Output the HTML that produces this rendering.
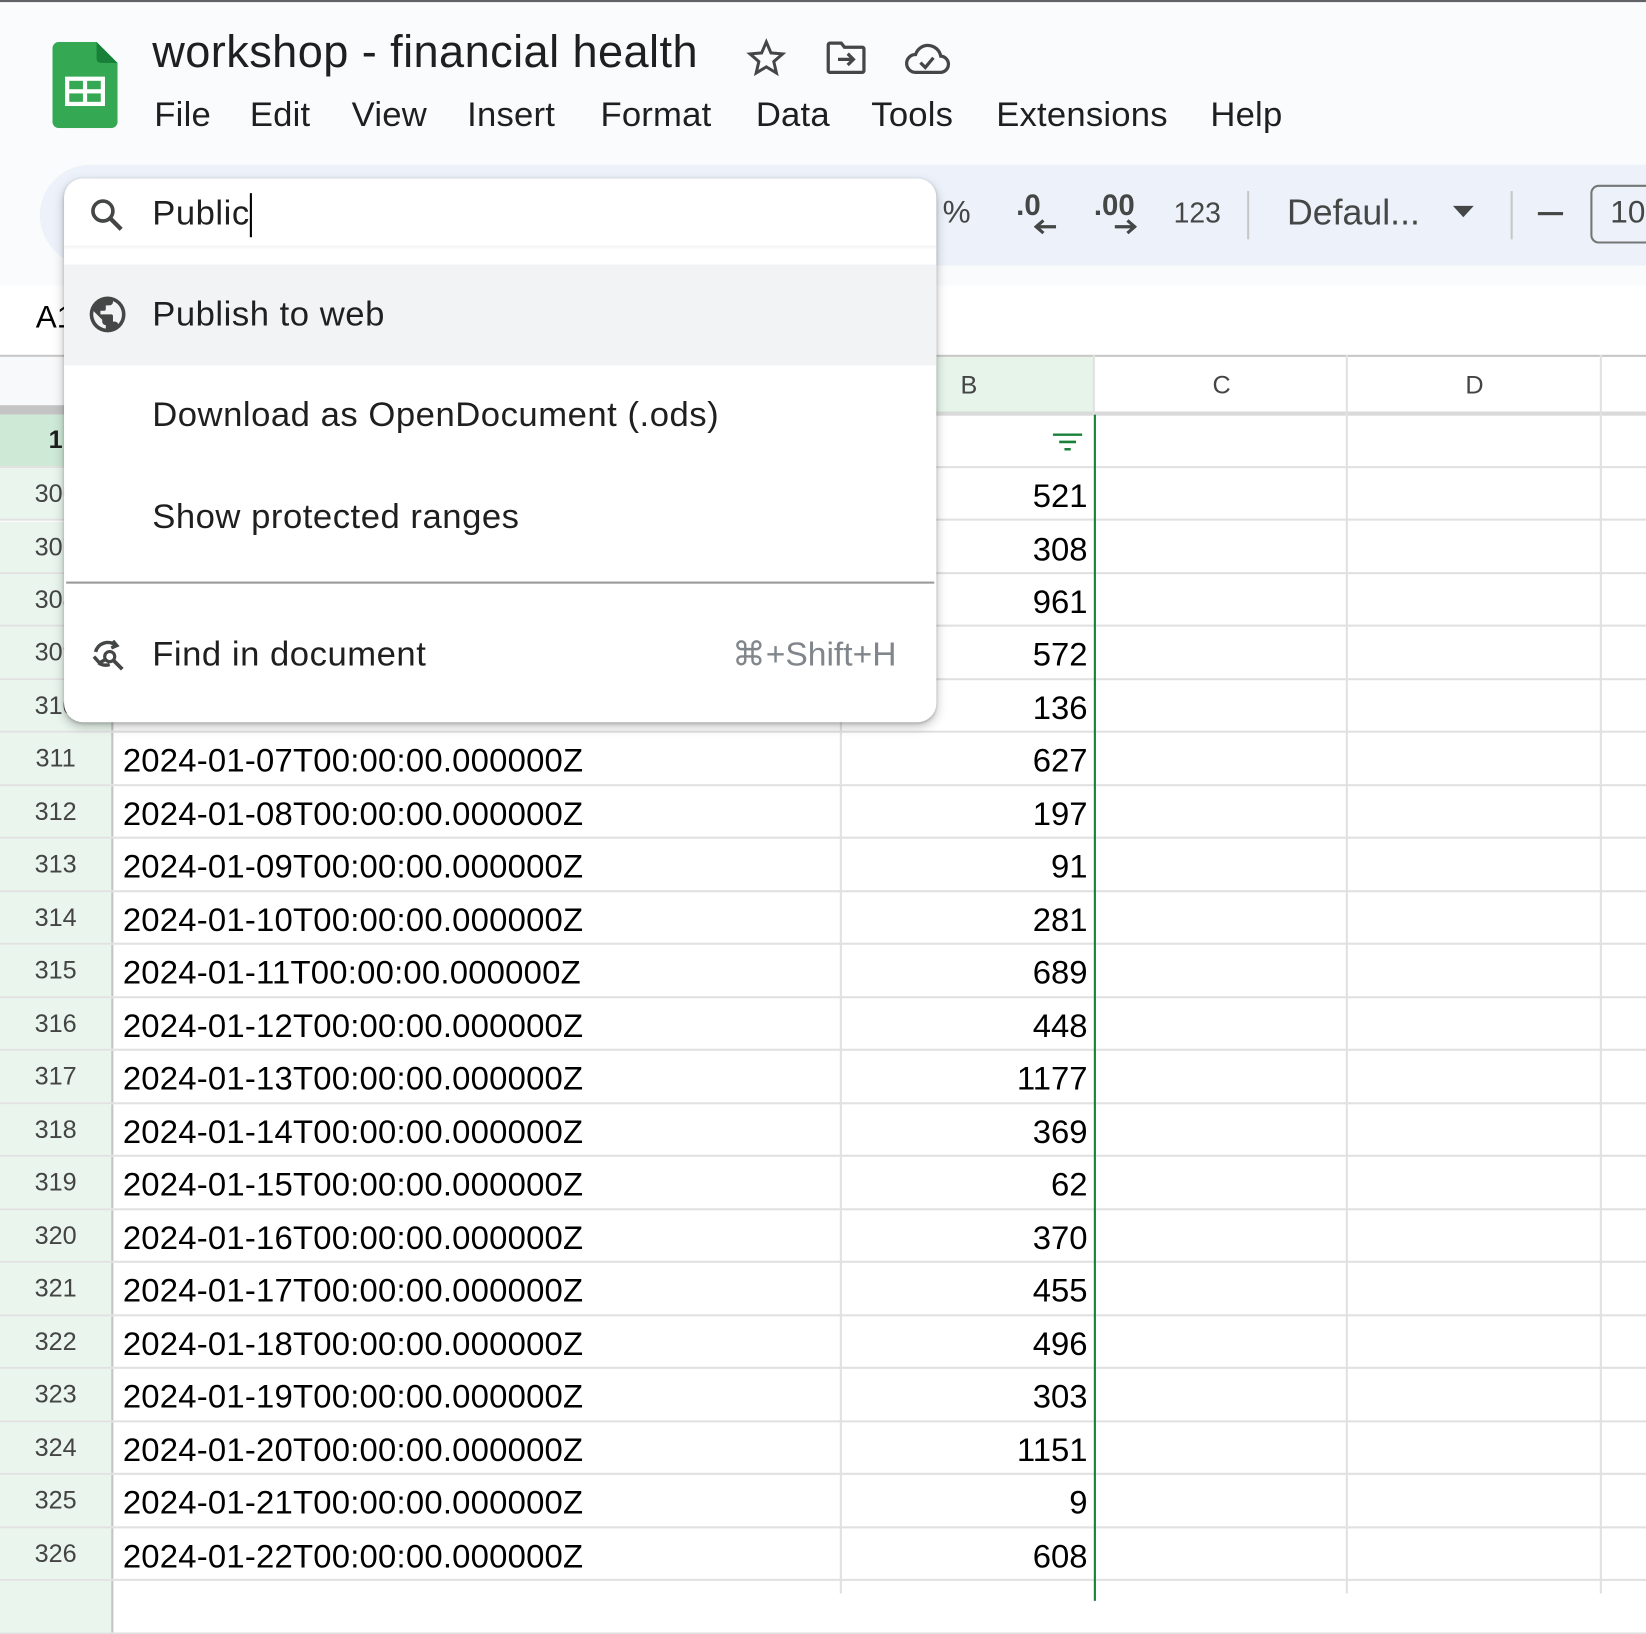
<!DOCTYPE html>
<html><head><meta charset="utf-8"><style>
*{box-sizing:border-box;margin:0;padding:0}
html,body{width:1646px;height:1592px;overflow:hidden;background:#fff}
#w{position:absolute;left:0;top:0;width:1568px;height:1517px;transform:scale(1.04974);transform-origin:0 0;font-family:"Liberation Sans",Arial,sans-serif;color:#1f1f1f}
.a{position:absolute}
.hdr{left:0;top:0;width:1568px;height:272px;background:#f9fbfd;border-top:2px solid #5f6368}
.menu span{position:absolute;top:90px;font-size:33px;color:#1f1f1f;letter-spacing:.2px}
.tb{left:38px;top:157px;width:1560px;height:96px;background:#edf2fa;border-radius:48px 0 0 48px}
.tbt{font-size:30px;color:#444746}
.grid{left:0;top:395px;width:1568px}
.row{position:absolute;left:0;width:1568px;height:50.48px;border-bottom:2px solid #e1e1e1}
.rh{position:absolute;left:0;top:0;width:108px;height:100%;background:#e9f5ed;border-right:2px solid #c4c4c4;text-align:center;font-size:24px;color:#444;line-height:50px}
.ca{position:absolute;left:117px;top:0;font-size:31.3px;line-height:54px;color:#000;letter-spacing:.2px}
.cb{position:absolute;left:801px;width:235px;top:0;text-align:right;font-size:31.3px;line-height:54px;color:#000}
.v{position:absolute;top:338px;width:2px;height:1180px;background:#e1e1e1}
.dd{left:61px;top:170px;width:831px;height:518px;background:#fff;border-radius:18px;box-shadow:0 4px 10px rgba(0,0,0,.25),0 1px 3px rgba(0,0,0,.2)}
.it{position:absolute;left:84px;font-size:33px;color:#1f1f1f;letter-spacing:.5px}
</style></head><body><div id="w">
<div class="a hdr"></div>
<svg class="a" style="left:50px;top:40px" width="62" height="82" viewBox="0 0 62 82"><path d="M6 0h36l20 20v56a6 6 0 0 1-6 6H6a6 6 0 0 1-6-6V6a6 6 0 0 1 6-6z" fill="#34a853"/><path d="M42 0l20 20H46a4 4 0 0 1-4-4z" fill="#188038"/><rect x="12" y="33" width="38" height="28" fill="#fff"/><rect x="16" y="37" width="13" height="8" fill="#34a853"/><rect x="33" y="37" width="13" height="8" fill="#34a853"/><rect x="16" y="49" width="13" height="8" fill="#34a853"/><rect x="33" y="49" width="13" height="8" fill="#34a853"/></svg>
<div class="a" style="left:145px;top:26px;font-size:43px;color:#1f1f1f;letter-spacing:.4px">workshop - financial health</div>
<svg class="a" style="left:710px;top:36px" width="40" height="38" viewBox="0 0 24 24"><path d="M12 2.5l2.8 6.6 7 .6-5.3 4.6 1.6 6.9L12 17.5l-6.1 3.7 1.6-6.9-5.3-4.6 7-.6z" fill="none" stroke="#444746" stroke-width="1.8"/></svg>
<svg class="a" style="left:785px;top:38px" width="42" height="34" viewBox="0 0 26 22"><path d="M2 3a1 1 0 0 1 1-1h7l2 2.5h11a1 1 0 0 1 1 1V19a1 1 0 0 1-1 1H3a1 1 0 0 1-1-1z" fill="none" stroke="#444746" stroke-width="2"/><path d="M8 12h9M14 8.5l3.5 3.5-3.5 3.5" fill="none" stroke="#444746" stroke-width="2"/></svg>
<svg class="a" style="left:860px;top:38px" width="46" height="34" viewBox="0 0 28 22"><path d="M7 20h15a5 5 0 0 0 .5-10A8 8 0 0 0 7 9a5.5 5.5 0 0 0 0 11z" fill="none" stroke="#444746" stroke-width="2"/><path d="M10 14l3 3 5-6" fill="none" stroke="#444746" stroke-width="2"/></svg>
<div class="menu"><span style="left:147px">File</span><span style="left:238px">Edit</span><span style="left:335px">View</span><span style="left:445px">Insert</span><span style="left:572px">Format</span><span style="left:720px">Data</span><span style="left:830px">Tools</span><span style="left:949px">Extensions</span><span style="left:1153px">Help</span></div>
<div class="a tb"></div>
<div class="a tbt" style="left:898px;top:186px">%</div>
<div class="a tbt" style="left:968px;top:180px;font-weight:bold;font-size:28px">.0</div>
<svg class="a" style="left:985px;top:208px" width="22" height="16"><path d="M21 8H3M9 2L2 8l7 6" fill="none" stroke="#444746" stroke-width="3"/></svg>
<div class="a tbt" style="left:1042px;top:180px;font-weight:bold;font-size:28px">.00</div>
<svg class="a" style="left:1061px;top:208px" width="22" height="16"><path d="M1 8h18M13 2l7 6-7 6" fill="none" stroke="#444746" stroke-width="3"/></svg>
<div class="a tbt" style="left:1118px;top:188px;font-size:27px">123</div>
<div class="a" style="left:1188px;top:182px;width:2px;height:46px;background:#c7c7c7"></div>
<div class="a tbt" style="left:1226px;top:184px;font-size:34px">Defaul...</div>
<svg class="a" style="left:1384px;top:196px" width="20" height="12"><path d="M0 0h20L10 11z" fill="#444746"/></svg>
<div class="a" style="left:1439px;top:182px;width:2px;height:46px;background:#c7c7c7"></div>
<div class="a" style="left:1465px;top:202px;width:24px;height:3px;background:#444746"></div>
<div class="a" style="left:1515px;top:176px;width:80px;height:56px;border:2px solid #747775;border-radius:8px"></div>
<div class="a tbt" style="left:1534px;top:186px;font-size:30px">10</div>
<div class="a" style="left:34px;top:286px;font-size:30px;color:#000">A1</div>
<div class="a" style="left:0;top:338px;width:1568px;height:2px;background:#c7c7c7"></div>
<div class="a" style="left:0;top:340px;width:108px;height:46px;background:#f8f9fa"></div>
<div class="a" style="left:801px;top:340px;width:241px;height:54px;background:#e6f4ea"></div>
<div class="a" style="left:915px;top:354px;font-size:24px;color:#444">B</div>
<div class="a" style="left:1155px;top:354px;font-size:24px;color:#444">C</div>
<div class="a" style="left:1396px;top:354px;font-size:24px;color:#444">D</div>
<div class="a" style="left:0;top:386px;width:108px;height:9px;background:#c4c4c4"></div>
<div class="a" style="left:108px;top:392px;width:1460px;height:4px;background:#dadada"></div>
<div class="a grid">
<div class="row" style="top:0;height:51px"><div class="rh" style="background:#cfe9d7;font-weight:bold;color:#1f1f1f">1</div><svg class="a" style="left:1003px;top:18px" width="28" height="18"><path d="M0 1h28M6 8h16M11 15h6" stroke="#188038" stroke-width="2.4"/></svg></div>
<div class="row" style="top:51px"><div class="rh">306</div><div class="ca">2024-01-02T00:00:00.000000Z</div><div class="cb">521</div></div>
<div class="row" style="top:101.5px"><div class="rh">307</div><div class="ca">2024-01-03T00:00:00.000000Z</div><div class="cb">308</div></div>
<div class="row" style="top:152px"><div class="rh">308</div><div class="ca">2024-01-04T00:00:00.000000Z</div><div class="cb">961</div></div>
<div class="row" style="top:202.4px"><div class="rh">309</div><div class="ca">2024-01-05T00:00:00.000000Z</div><div class="cb">572</div></div>
<div class="row" style="top:252.9px"><div class="rh">310</div><div class="ca">2024-01-06T00:00:00.000000Z</div><div class="cb">136</div></div>
<div class="row" style="top:303.4px"><div class="rh">311</div><div class="ca">2024-01-07T00:00:00.000000Z</div><div class="cb">627</div></div>
<div class="row" style="top:353.9px"><div class="rh">312</div><div class="ca">2024-01-08T00:00:00.000000Z</div><div class="cb">197</div></div>
<div class="row" style="top:404.4px"><div class="rh">313</div><div class="ca">2024-01-09T00:00:00.000000Z</div><div class="cb">91</div></div>
<div class="row" style="top:454.8px"><div class="rh">314</div><div class="ca">2024-01-10T00:00:00.000000Z</div><div class="cb">281</div></div>
<div class="row" style="top:505.3px"><div class="rh">315</div><div class="ca">2024-01-11T00:00:00.000000Z</div><div class="cb">689</div></div>
<div class="row" style="top:555.8px"><div class="rh">316</div><div class="ca">2024-01-12T00:00:00.000000Z</div><div class="cb">448</div></div>
<div class="row" style="top:606.3px"><div class="rh">317</div><div class="ca">2024-01-13T00:00:00.000000Z</div><div class="cb">1177</div></div>
<div class="row" style="top:656.8px"><div class="rh">318</div><div class="ca">2024-01-14T00:00:00.000000Z</div><div class="cb">369</div></div>
<div class="row" style="top:707.2px"><div class="rh">319</div><div class="ca">2024-01-15T00:00:00.000000Z</div><div class="cb">62</div></div>
<div class="row" style="top:757.7px"><div class="rh">320</div><div class="ca">2024-01-16T00:00:00.000000Z</div><div class="cb">370</div></div>
<div class="row" style="top:808.2px"><div class="rh">321</div><div class="ca">2024-01-17T00:00:00.000000Z</div><div class="cb">455</div></div>
<div class="row" style="top:858.7px"><div class="rh">322</div><div class="ca">2024-01-18T00:00:00.000000Z</div><div class="cb">496</div></div>
<div class="row" style="top:909.2px"><div class="rh">323</div><div class="ca">2024-01-19T00:00:00.000000Z</div><div class="cb">303</div></div>
<div class="row" style="top:959.6px"><div class="rh">324</div><div class="ca">2024-01-20T00:00:00.000000Z</div><div class="cb">1151</div></div>
<div class="row" style="top:1010.1px"><div class="rh">325</div><div class="ca">2024-01-21T00:00:00.000000Z</div><div class="cb">9</div></div>
<div class="row" style="top:1060.6px"><div class="rh">326</div><div class="ca">2024-01-22T00:00:00.000000Z</div><div class="cb">608</div></div>
<div class="row" style="top:1111.1px"><div class="rh"></div></div>
</div>
<div class="v" style="left:800px"></div>
<div class="v" style="left:1282px"></div>
<div class="v" style="left:1524px"></div>
<div class="a" style="left:1041px;top:338px;width:2px;height:57px;background:#e1e1e1"></div>
<div class="a" style="left:1042px;top:395px;width:2px;height:1130px;background:#188038"></div>
<div class="a dd">
<svg class="a" style="left:22px;top:16px" width="38" height="38" viewBox="0 0 24 24"><circle cx="9.5" cy="9.5" r="6" fill="none" stroke="#444746" stroke-width="2.2"/><path d="M14 14l6.5 6.5" stroke="#444746" stroke-width="2.6"/></svg>
<div class="it" style="top:14px">Public</div>
<div class="a" style="left:177px;top:14px;width:2px;height:42px;background:#000"></div>
<div class="a" style="left:0;top:64px;width:831px;height:4px;background:linear-gradient(#f2f2f2,#fff)"></div>
<div class="a" style="left:0;top:82px;width:831px;height:96px;background:#f1f3f4"></div>
<svg class="a" style="left:21px;top:109px" width="41" height="41" viewBox="0 0 24 24"><path fill="#444746" d="M12 2a10 10 0 1 0 0 20 10 10 0 0 0 0-20zm-1 17.9A8 8 0 0 1 4.2 10.2L9 15v1a2 2 0 0 0 2 2zm6.9-2.5A2 2 0 0 0 16 16h-1v-3a1 1 0 0 0-1-1H8v-2h2a1 1 0 0 0 1-1V7h2a2 2 0 0 0 2-2v-.4a8 8 0 0 1 2.9 12.8z"/></svg>
<div class="it" style="top:110px">Publish to web</div>
<div class="it" style="top:206px">Download as OpenDocument (.ods)</div>
<div class="it" style="top:303px">Show protected ranges</div>
<div class="a" style="left:2px;top:384px;width:827px;height:2px;background:#9a9a9a"></div>
<svg class="a" style="left:24px;top:436px" width="36" height="36" viewBox="0 0 24 24"><path d="M4 10a8 8 0 0 1 13-4M15 3l2.5 3L14 7.5" fill="none" stroke="#444746" stroke-width="2.2"/><path d="M3 13l3.5 4 3.5-2M6 17a8 8 0 0 0 7 1" fill="none" stroke="#444746" stroke-width="2.2"/><circle cx="13" cy="13" r="3.2" fill="none" stroke="#444746" stroke-width="2"/><path d="M15.5 15.5L21 21" stroke="#444746" stroke-width="2.4"/></svg>
<div class="it" style="top:434px">Find in document</div>
<div class="a" style="right:38px;top:434px;font-size:32px;color:#80868b">⌘+Shift+H</div>
</div>
</div></body></html>
